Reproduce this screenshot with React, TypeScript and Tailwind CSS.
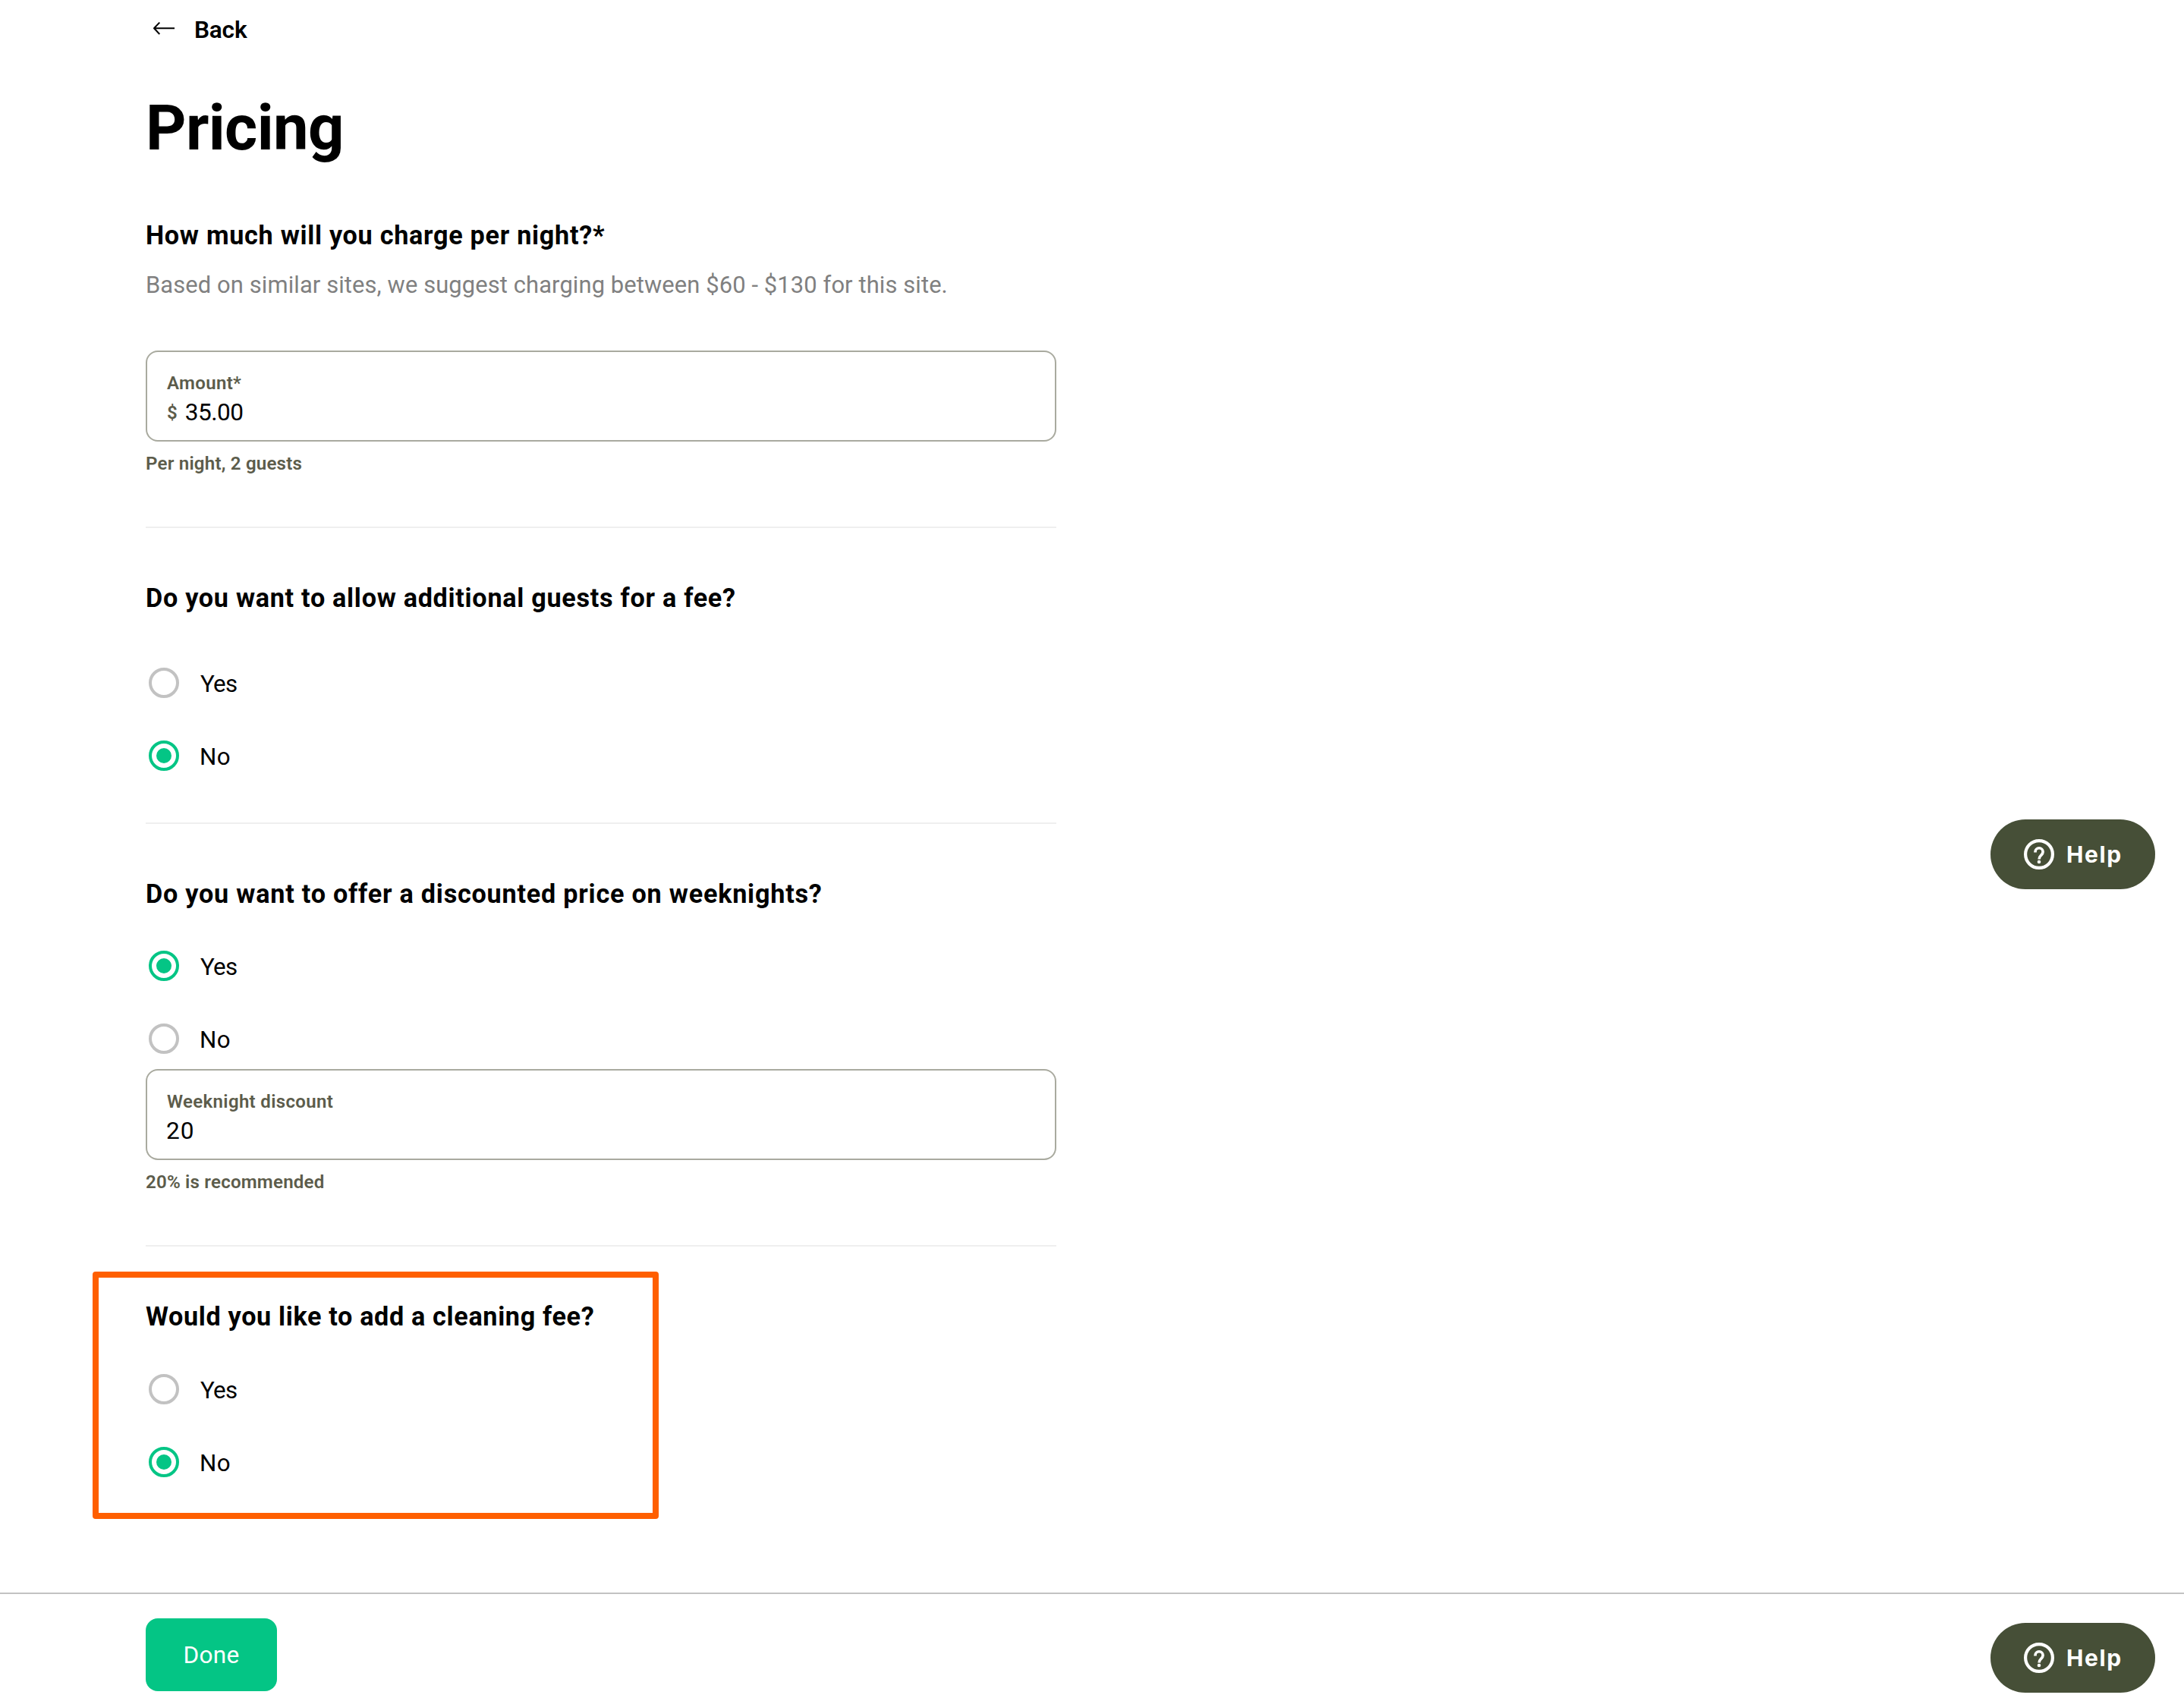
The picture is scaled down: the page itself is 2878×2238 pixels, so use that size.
import React from "react";

function BackArrow() {
  return (
    <svg className="block h-10 w-10" viewBox="0 0 40 40" fill="none" stroke="#000" strokeWidth="2">
      <path d="M34 20.3H7.2M14.3 12.6L7 20.3l7.3 7.7" strokeLinejoin="round" />
    </svg>
  );
}

function Question({ children, tracking }: { children: string; tracking: string }) {
  return (
    <h2 className={`h-10 whitespace-nowrap text-[34.2px] leading-10 font-bold ${tracking}`}>{children}</h2>
  );
}

function Radio({ label, checked = false }: { label: string; checked?: boolean }) {
  return (
    <label className="flex h-10 items-center pl-1">
      <span
        className={`flex size-10 items-center justify-center rounded-full border-4 ${
          checked ? "border-[#04c585]" : "border-[#c2c2c2]"
        }`}
      >
        {checked && <span className="size-5 rounded-full bg-[#04c585]" />}
      </span>
      <span
        className={`mt-1 text-[31.3px] leading-10 ${
          label === "Yes" ? "ml-[28px] tracking-[-0.69px]" : "ml-[27px] tracking-[0.4px]"
        }`}
      >
        {label}
      </span>
    </label>
  );
}

function Field({
  label,
  value,
  help,
  prefix,
}: {
  label: string;
  value: string;
  help: string;
  prefix?: string;
}) {
  return (
    <div>
      <div className="h-[120px] rounded-2xl border-2 border-[#a9aa9f] pt-[26px] pl-[26px]">
        <div className="h-[30px] text-[24px] leading-[30px] font-semibold tracking-[0.34px] text-[#5c5c4b]">{label}</div>
        <div className="mt-1.5 flex h-9 items-center">
          {prefix && (
            <span className="mr-[10px] text-[24px] leading-9 font-semibold text-[#5c5c4b]">{prefix}</span>
          )}
          <span
            className={
              prefix
                ? "text-[31.6px] leading-9 tracking-[-0.5px]"
                : "-ml-px text-[31.6px] leading-9 tracking-[1.1px]"
            }
          >
            {value}
          </span>
        </div>
      </div>
      <div className="mt-[14px] h-[30px] text-[24.1px] leading-[30px] font-semibold tracking-[0.2px] text-[#5c5c4b]">
        {help}
      </div>
    </div>
  );
}

function Divider() {
  return <div className="h-0.5 bg-[#efefef]" />;
}

function HelpButton() {
  return (
    <button className="flex h-[92px] w-[217px] items-center rounded-full bg-[#464f37] pl-11 text-white">
      <svg className="size-10" viewBox="0 0 40 40" fill="none" stroke="#fff">
        <circle cx="20" cy="20" r="17.9" strokeWidth="4.2" />
        <path
          d="M15 17.4v-.6a5 5 0 0 1 10.1 0c0 2.3-1.2 3.3-2.7 4.7-1.4 1.3-2.3 2.4-2.3 5"
          strokeWidth="3.7"
        />
        <circle cx="20" cy="30" r="2.3" fill="#fff" stroke="none" />
      </svg>
      <span className="ml-[16px] font-[Inter] text-[30px] leading-10 font-bold tracking-[1.6px]">Help</span>
    </button>
  );
}

export default function App() {
  return (
    <div className="relative flex h-[2238px] w-[2878px] flex-col overflow-hidden bg-white font-[Roboto,sans-serif] text-black">
      <main className="ml-[192px] w-[1200px] flex-1">
        <a className="flex h-[60px] items-end pl-1">
          <span className="mb-[3px]">
            <BackArrow />
          </span>
          <span className="ml-[20px] text-[31.6px] leading-10 font-semibold tracking-[-0.2px]">Back</span>
        </a>
        <h1 className="mt-[61px] h-24 text-[83.1px] leading-[96px] font-bold tracking-[-0.65px]">Pricing</h1>

        <section className="mt-[73px]">
          <Question tracking="tracking-[0.71px]">How much will you charge per night?*</Question>
          <p className="mt-[26px] h-10 text-[30.9px] leading-10 tracking-[0.11px] whitespace-nowrap text-[#808080]">
            Based on similar sites, we suggest charging between $60 - $130 for this site.
          </p>
          <div className="mt-[66px] mb-[68px]">
            <Field label="Amount*" prefix="$" value="35.00" help="Per night, 2 guests" />
          </div>
        </section>
        <Divider />

        <section className="mt-[72px] mb-[68px]">
          <Question tracking="tracking-[0.71px]">Do you want to allow additional guests for a fee?</Question>
          <div className="mt-[72px] flex flex-col gap-14">
            <Radio label="Yes" />
            <Radio label="No" checked />
          </div>
        </section>
        <Divider />

        <section className="mt-[72px] mb-[68px]">
          <Question tracking="tracking-[0.77px]">Do you want to offer a discounted price on weeknights?</Question>
          <div className="mt-[55px] mb-5 flex flex-col gap-14">
            <Radio label="Yes" checked />
            <Radio label="No" />
          </div>
          <Field label="Weeknight discount" value="20" help="20% is recommended" />
        </section>
        <Divider />

        <section className="relative mt-[72px]">
          <Question tracking="tracking-[0.65px]">Would you like to add a cleaning fee?</Question>
          <div className="mt-14 flex flex-col gap-14">
            <Radio label="Yes" />
            <Radio label="No" checked />
          </div>
          <div className="absolute -top-[39px] -left-[70px] h-[326px] w-[746px] rounded-[4px] border-8 border-[#ff5f00]" />
        </section>
      </main>

      <footer className="flex h-[139px] items-start justify-between border-t-2 border-[#c2c2c2] pr-[38px] pl-[192px]">
        <button className="mt-8 h-24 w-[173px] rounded-2xl bg-[#04c585] pt-0.5 text-[31.6px] leading-10 tracking-[0.27px] text-white">
          Done
        </button>
        <div className="mt-[38px]">
          <HelpButton />
        </div>
      </footer>

      <div className="absolute top-[1080px] right-[38px]">
        <HelpButton />
      </div>
    </div>
  );
}
